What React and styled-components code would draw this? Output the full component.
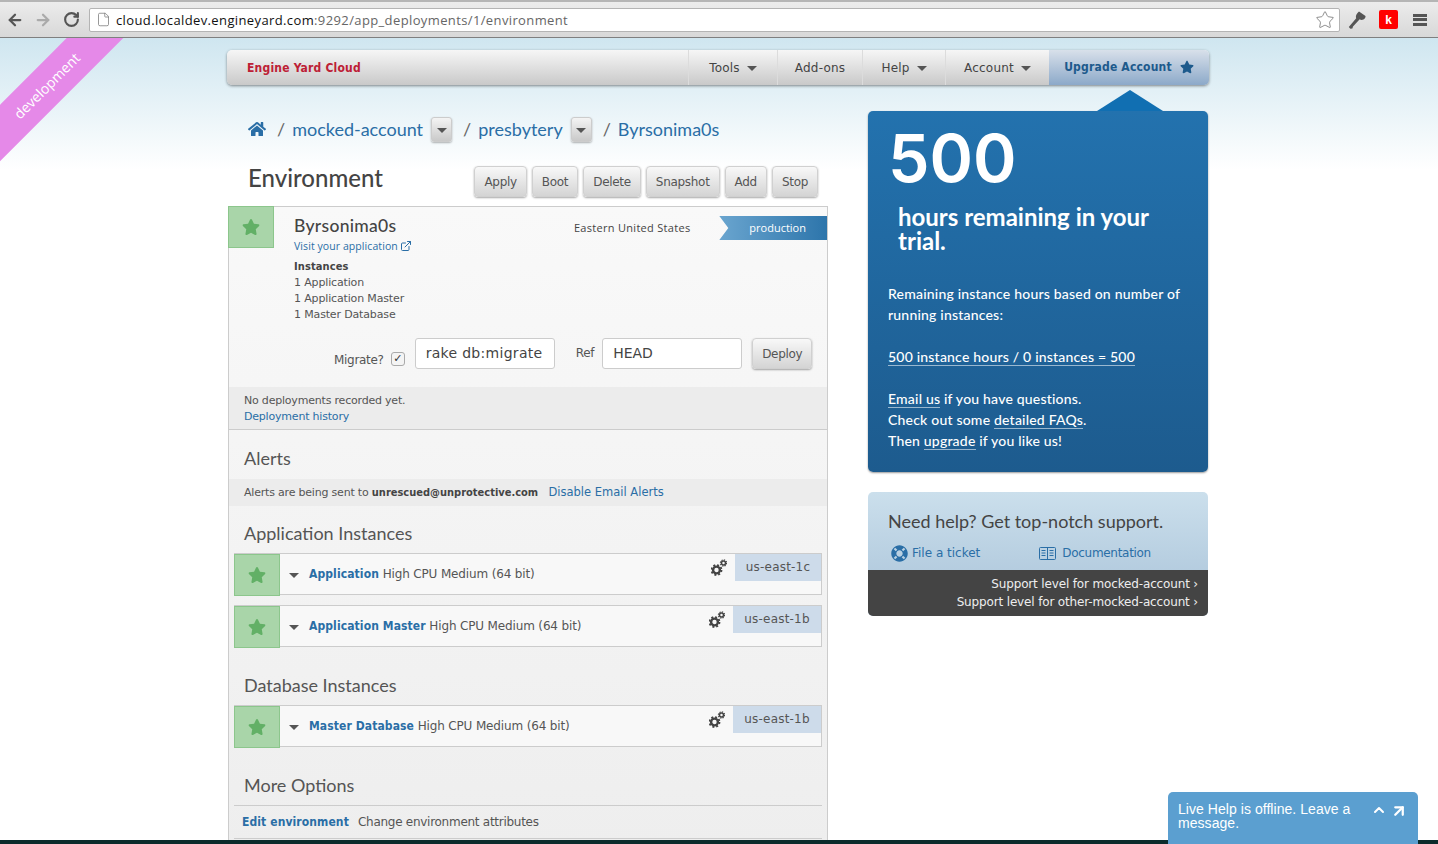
import React from 'react';
import styled, { createGlobalStyle } from 'styled-components';
import { ArrowLeft, ArrowRight, RotateCw, File, Star, ExternalLink, ChevronUp, ArrowUpRight } from 'lucide-react';
import { FaHome, FaStar, FaLifeRing } from 'react-icons/fa';

const GlobalStyle = createGlobalStyle`
  html, body {
    margin: 0;
    height: 844px;
    overflow: hidden;
    background: #fff;
    font-family: 'DejaVu Sans', sans-serif;
    color: #444;
  }
  * { box-sizing: border-box; }
  a { color: #2a6ea6; text-decoration: none; }
`;

const BLUE = '#2a6ea6';
const HEADING = "'Lato', 'Open Sans', sans-serif";
const CONDENSED = "'DejaVu Sans Condensed', 'DejaVu Sans', sans-serif";

const Browser = styled.div`
  height: 38px;
  background: linear-gradient(#ececec, #d8d8d8);
  border-bottom: 1px solid #7f7f7f;
  border-top: 2px solid #b5b5b5;
  display: flex;
  align-items: center;
  padding: 0 11px 0 1px;
  color: #555;
`;
const NavBtn = styled.span`
  width: 28px;
  display: flex;
  justify-content: center;
  color: ${(p) => (p.$off ? '#aaa' : '#555')};
`;
const Address = styled.div`
  width: 1251px;
  height: 24px;
  margin-left: 4px;
  background: #fff;
  border: 1px solid #b4b4b4;
  border-radius: 2px;
  display: flex;
  align-items: center;
  padding: 0 4px 0 6px;
  font-family: 'Open Sans', sans-serif;
  font-size: 13px;
  letter-spacing: 0.38px;
  color: #111;
  span { color: #666; }
  svg:first-child { margin-right: 5px; color: #777; }
  svg:last-child { margin-left: auto; color: #777; }
`;
const Tools = styled.div`
  margin-left: auto;
  display: flex;
  align-items: center;
  gap: 12px;
`;
const ExtK = styled.span`
  width: 19px;
  height: 19px;
  background: #f00;
  border-radius: 2px;
  color: #fff;
  font: bold 12px 'Liberation Sans', sans-serif;
  display: flex;
  align-items: center;
  justify-content: center;
`;
const Burger = styled.span`
  width: 14px;
  height: 12px;
  margin-left: 3px;
  border-top: 3px solid #555;
  border-bottom: 3px solid #555;
  position: relative;
  &::after {
    content: '';
    position: absolute;
    left: 0;
    right: 0;
    top: 1.5px;
    height: 3px;
    background: #555;
  }
`;

const Page = styled.div`
  position: relative;
  height: 806px;
  overflow: hidden;
  background: linear-gradient(#cfe6f0 0, #fff 132px);
`;
const DevRibbon = styled.div`
  position: absolute;
  left: -53px;
  top: 28px;
  width: 200px;
  height: 40px;
  transform: rotate(-45deg);
  background: #e589e8;
  color: #fff;
  font: 14px/40px 'Open Sans', sans-serif;
  text-align: center;
`;
const Container = styled.div`
  width: 982px;
  margin-left: 227px;
  padding-top: 12px;
`;

const TopNav = styled.nav`
  height: 35px;
  display: flex;
  border-radius: 5px;
  background: linear-gradient(#f6f6f6, #c9c9c9);
  box-shadow: 0 1px 3px rgba(0, 0, 0, 0.45);
  font-size: 12px;
  letter-spacing: 0.2px;
`;
const Brand = styled.div`
  flex: 1;
  padding-left: 20px;
  line-height: 37px;
  font-family: ${CONDENSED};
  font-weight: bold;
  color: #bd2035;
`;
const NavItem = styled.div`
  width: ${(p) => p.$w}px;
  border-left: 1px solid #dcdcdc;
  display: flex;
  align-items: center;
  justify-content: center;
  gap: 7px;
  color: #444;
`;
const Caret = styled.i`
  width: 0;
  height: 0;
  border-left: 5px solid transparent;
  border-right: 5px solid transparent;
  border-top: 5px solid ${(p) => p.$color || '#555'};
  margin-top: 2px;
`;
const Upgrade = styled.div`
  width: 160px;
  border-radius: 0 5px 5px 0;
  background: linear-gradient(#d8e0ea, #8ca9c9);
  display: flex;
  align-items: center;
  justify-content: center;
  gap: 8px;
  padding-bottom: 2px;
  font-family: ${CONDENSED};
  font-weight: bold;
  color: #1d5a8c;
`;

const Columns = styled.div`
  display: grid;
  grid-template-columns: 601px 341px;
  column-gap: 40px;
  margin-top: 26px;
`;
const Left = styled.div`
  padding-left: 1px;
`;
const Crumbs = styled.div`
  height: 38px;
  display: flex;
  align-items: center;
  padding: 0 0 2px 20px;
  font-family: ${HEADING};
  font-size: 18px;
  color: #666;
`;
const Slash = styled.span`
  margin: 0 7px 0 11px;
`;
const CrumbBtn = styled.span`
  width: 21px;
  height: 25px;
  margin-left: 8px;
  border: 1px solid #ccc;
  border-radius: 3px;
  background: linear-gradient(#f4f4f4, #c9c9c9);
  box-shadow: 0 1px 2px rgba(0, 0, 0, 0.3);
  display: flex;
  align-items: center;
  justify-content: center;
`;
const TitleRow = styled.div`
  height: 57px;
  display: flex;
  align-items: flex-start;
  padding: 17px 10px 0 20px;
`;
const Title = styled.h1`
  margin: -1px auto 0 0;
  font: 500 24px/26px ${HEADING};
  color: #444;
`;
const Btn = styled.button`
  height: 31px;
  margin-left: 5px;
  padding: 0 9px;
  border: 1px solid #d0d0d0;
  border-radius: 4px;
  background: linear-gradient(#f8f8f8, #d4d4d4);
  box-shadow: 0 1px 2px rgba(0, 0, 0, 0.35);
  font: 12px 'DejaVu Sans', sans-serif;
  letter-spacing: -0.3px;
  color: #555;
`;

const Panel = styled.section`
  height: 640px;
  border: 1px solid #ccc;
  border-bottom: 0;
  background: linear-gradient(#f9f9f9, #eee);
`;
const Head = styled.div`
  display: flex;
  align-items: flex-start;
  height: 115px;
  margin-left: -1px;
  margin-top: -1px;
`;
const StarBox = styled.div`
  width: 46px;
  height: ${(p) => p.$h || 42}px;
  flex: none;
  background: #a9d5a9;
  border: 1px solid #8cc68c;
  color: #62b066;
  display: flex;
  align-items: center;
  justify-content: center;
`;
const Info = styled.div`
  margin-left: 20px;
  padding-top: 10px;
  width: 281px;
  font-size: 11px;
  line-height: 16px;
  letter-spacing: -0.15px;
  color: #555;
  strong {
    display: block;
    margin-top: 5px;
    font-family: ${CONDENSED};
    letter-spacing: 0.1px;
    color: #444;
  }
`;
const EnvName = styled.div`
  font: 500 17.5px/20px ${HEADING};
  letter-spacing: 0.3px;
  color: #444;
  margin-bottom: 2px;
`;
const Visit = styled.a`
  display: flex;
  align-items: center;
  gap: 2px;
  font: 10.5px/16px 'Open Sans', sans-serif;
  letter-spacing: 0.08px;
`;
const Region = styled.div`
  margin-top: 14px;
  width: 146px;
  font: 11px/16px 'Open Sans', sans-serif;
  letter-spacing: 0.3px;
  color: #444;
`;
const Ribbon = styled.div`
  width: 108px;
  height: 24px;
  margin-top: 10px;
  padding-left: 30px;
  background: linear-gradient(90deg, #6aa5cf, #2d75ab);
  clip-path: polygon(0 0, 100% 0, 100% 100%, 0 100%, 9px 50%);
  color: #fff;
  font: 11px/24px 'Open Sans', sans-serif;
`;
const DeployRow = styled.div`
  height: 49px;
  margin-top: 17px;
  display: flex;
  align-items: flex-start;
  padding-left: 105px;
  font-size: 12px;
  letter-spacing: -0.3px;
  color: #555;
`;
const Label = styled.span`
  line-height: 31px;
  margin-top: ${(p) => p.$top || 0}px;
`;
const Check = styled.span`
  width: 14px;
  height: 14px;
  margin: 14px 10px 0 7px;
  border: 1px solid #aaa;
  border-radius: 3px;
  background: #f4f4f4;
  font-size: 11px;
  line-height: 12px;
  text-align: center;
  color: #333;
`;
const Field = styled.div`
  width: ${(p) => p.$w}px;
  height: 31px;
  margin: 0 ${(p) => p.$after}px 0 8px;
  padding-left: 10px;
  background: #fff;
  border: 1px solid #ccc;
  border-radius: 3px;
  font-size: 14px;
  line-height: 29px;
  letter-spacing: ${(p) => p.$spacing || 0}px;
  color: #444;
  &:first-of-type { margin-left: 0; }
`;
const Band = styled.div`
  padding: ${(p) => p.$pad};
  background: #ececec;
  font-size: 11px;
  line-height: 16px;
  letter-spacing: -0.2px;
  color: #555;
  border-bottom: ${(p) => (p.$line ? '1px solid #ccc' : '0')};
  b {
    font-family: ${CONDENSED};
    letter-spacing: 0;
    color: #444;
  }
`;
const AlertLink = styled.a`
  margin-left: 7px;
  font-size: 11.5px;
  letter-spacing: 0;
`;
const SectionTitle = styled.h2`
  margin: 0;
  padding: ${(p) => p.$before || 18}px 0 ${(p) => p.$after || 10}px 15px;
  font: 400 18px/20px ${HEADING};
  color: #555;
`;
const Row = styled.div`
  height: 42px;
  margin: 0 5px 10px;
  display: flex;
  background: #f8f8f8;
  border: 1px solid #ccc;
  border-left: 0;
  font-size: 12px;
  color: #555;
  &:last-of-type { margin-bottom: 0; }
`;
const RowCaret = styled(Caret)`
  align-self: center;
  margin: 2px 10px 0 9px;
`;
const RowText = styled.div`
  flex: 1;
  line-height: 40px;
  letter-spacing: -0.15px;
  a {
    font-family: ${CONDENSED};
    font-weight: bold;
    letter-spacing: 0.1px;
  }
`;
const Gears = styled.svg`
  margin: 5px 8px 0 0;
  color: #444;
`;
const Zone = styled.div`
  width: ${(p) => p.$w}px;
  height: 27px;
  background: #cddbea;
  text-align: center;
  line-height: 26px;
  letter-spacing: 0.2px;
`;
const Option = styled.div`
  height: 34px;
  margin: 0 5px;
  padding-left: 8px;
  border-top: 1px solid #ccc;
  border-bottom: 1px solid #ccc;
  font-size: 12px;
  line-height: 32px;
  letter-spacing: -0.27px;
  color: #555;
  a {
    font-family: ${CONDENSED};
    font-weight: bold;
    letter-spacing: 0.1px;
    margin-right: 9px;
  }
`;

const Right = styled.aside`
  padding-right: 1px;
`;
const Trial = styled.div`
  position: relative;
  height: 361px;
  padding: 17px 20px 0;
  border-radius: 5px;
  background: linear-gradient(#2372ae, #1d5b8e);
  box-shadow: 0 1px 2px rgba(0, 0, 0, 0.4);
  color: #fff;
  font-family: ${HEADING};
  &::before {
    content: '';
    position: absolute;
    left: 229px;
    top: -21px;
    width: 66px;
    height: 21px;
    background: #116fb2;
    clip-path: polygon(50% 0, 100% 100%, 0 100%);
  }
`;
const Big = styled.div`
  font-family: 'Inter', sans-serif;
  font-size: 66px;
  font-weight: 600;
  line-height: 60px;
`;
const Hours = styled.div`
  margin: 17px 30px 30px 10px;
  font-size: 24px;
  font-weight: 700;
  line-height: 24px;
`;
const TrialText = styled.p`
  margin: 0 0 ${(p) => p.$after || 0}px;
  font-size: 14px;
  font-weight: 500;
  line-height: 21px;
  letter-spacing: 0.2px;
  u { text-decoration: none; border-bottom: 1px solid rgba(255, 255, 255, 0.55); }
`;
const Help = styled.div`
  height: 124px;
  margin-top: 20px;
  border-radius: 5px;
  overflow: hidden;
  background: linear-gradient(#cbdfec, #a8c2d8);
`;
const HelpTitle = styled.div`
  padding: 19px 20px 0;
  font: 400 18px/20px ${HEADING};
  color: #444;
`;
const HelpLinks = styled.div`
  height: 39px;
  display: flex;
  align-items: center;
  padding: 5px 0 0 23px;
  font-size: 12px;
  letter-spacing: -0.15px;
`;
const HelpLink = styled.a`
  display: flex;
  align-items: center;
  gap: ${(p) => p.$gap}px;
  margin-left: ${(p) => p.$left || 0}px;
  letter-spacing: ${(p) => p.$spacing || 0}px;
`;
const Support = styled.div`
  height: 46px;
  padding: 5px 10px 0;
  background: #444;
  color: #eee;
  font-size: 12px;
  line-height: 18px;
  letter-spacing: -0.15px;
  text-align: right;
`;

const Chat = styled.div`
  position: fixed;
  right: 20px;
  bottom: 0;
  width: 250px;
  height: 52px;
  padding: 10px 10px 0;
  border-radius: 5px 5px 0 0;
  background: #5b9fd0;
  color: #fff;
  font: 14px/14px 'Liberation Sans', sans-serif;
  letter-spacing: 0.05px;
  display: flex;
`;
const ChatText = styled.div`
  width: 186px;
`;
const ChatIcons = styled.div`
  display: flex;
  gap: 3px;
  margin-left: 9px;
  height: 16px;
`;
const BottomStrip = styled.div`
  position: fixed;
  left: 0;
  right: 0;
  bottom: 0;
  height: 4px;
  background: #0b2c2c;
`;

function GearIcon() {
  return (
    <Gears width="16" height="17" viewBox="0 0 16 17">
      <circle cx="5.5" cy="11" r="3.4" fill="none" stroke="currentColor" strokeWidth="2.4" />
      <circle cx="5.5" cy="11" r="5" fill="none" stroke="currentColor" strokeWidth="1.8" strokeDasharray="2 1.93" />
      <circle cx="12.5" cy="4" r="2" fill="none" stroke="currentColor" strokeWidth="1.5" />
      <circle cx="12.5" cy="4" r="3.1" fill="none" stroke="currentColor" strokeWidth="1.2" strokeDasharray="1.3 1.13" />
    </Gears>
  );
}

function KeyIcon() {
  return (
    <svg width="20" height="20" viewBox="0 0 20 20" fill="#555">
      <path d="M12 1.5 18.5 6c.3.8-.4 2.6-2 3.4-1.4.7-2.8.6-3.8-.1L6 16.5l-.6 2-2 .2L1.8 17l7.4-8.8c-.6-1.3-.3-2.8.6-4.2.5-.9 1.3-1.9 2.2-2.5Z" />
    </svg>
  );
}

function BookIcon() {
  return (
    <svg width="17" height="13" viewBox="0 0 17 13" fill="none" stroke="currentColor" strokeWidth="1">
      <rect x="0.5" y="0.5" width="16" height="12" rx="1" />
      <path d="M8.5 1v11M2.5 3.5h4M2.5 6h4M2.5 8.5h4M10.5 3.5h4M10.5 6h4M10.5 8.5h4" />
    </svg>
  );
}

function InstanceRow({ name, zone, zoneWidth }) {
  return (
    <Row>
      <StarBox><FaStar size={18} /></StarBox>
      <RowCaret />
      <RowText><a href="#">{name}</a> High CPU Medium (64 bit)</RowText>
      <GearIcon />
      <Zone $w={zoneWidth}>{zone}</Zone>
    </Row>
  );
}

export default function App() {
  return (
    <>
      <GlobalStyle />
      <Browser>
        <NavBtn><ArrowLeft size={18} strokeWidth={3} /></NavBtn>
        <NavBtn $off><ArrowRight size={18} strokeWidth={3} /></NavBtn>
        <NavBtn><RotateCw size={17} strokeWidth={3} /></NavBtn>
        <Address>
          <File size={15} strokeWidth={1.2} />
          cloud.localdev.engineyard.com<span>:9292/app_deployments/1/environment</span>
          <Star size={20} strokeWidth={1} />
        </Address>
        <Tools>
          <KeyIcon />
          <ExtK>k</ExtK>
          <Burger />
        </Tools>
      </Browser>
      <Page>
        <DevRibbon>development</DevRibbon>
        <Container>
          <TopNav>
            <Brand>Engine Yard Cloud</Brand>
            <NavItem $w={89}>Tools <Caret /></NavItem>
            <NavItem $w={85}>Add-ons</NavItem>
            <NavItem $w={83}>Help <Caret /></NavItem>
            <NavItem $w={104}>Account <Caret /></NavItem>
            <Upgrade>Upgrade Account <FaStar size={14} /></Upgrade>
          </TopNav>
          <Columns>
            <Left>
              <Crumbs>
                <FaHome size={18} color={BLUE} />
                <Slash>/</Slash>
                <a href="#">mocked-account</a>
                <CrumbBtn><Caret /></CrumbBtn>
                <Slash>/</Slash>
                <a href="#">presbytery</a>
                <CrumbBtn><Caret /></CrumbBtn>
                <Slash>/</Slash>
                <a href="#">Byrsonima0s</a>
              </Crumbs>
              <TitleRow>
                <Title>Environment</Title>
                <Btn>Apply</Btn>
                <Btn>Boot</Btn>
                <Btn>Delete</Btn>
                <Btn>Snapshot</Btn>
                <Btn>Add</Btn>
                <Btn>Stop</Btn>
              </TitleRow>
              <Panel>
                <Head>
                  <StarBox><FaStar size={18} /></StarBox>
                  <Info>
                    <EnvName>Byrsonima0s</EnvName>
                    <Visit href="#">Visit your application<ExternalLink size={12} /></Visit>
                    <strong>Instances</strong>
                    1 Application<br />
                    1 Application Master<br />
                    1 Master Database
                  </Info>
                  <Region>Eastern United States</Region>
                  <Ribbon>production</Ribbon>
                </Head>
                <DeployRow>
                  <Label $top={7}>Migrate?</Label>
                  <Check>✓</Check>
                  <Field $w={140} $after={21} $spacing={0.3}>rake db:migrate</Field>
                  <Label>Ref</Label>
                  <Field $w={140} $after={5}>HEAD</Field>
                  <Btn>Deploy</Btn>
                </DeployRow>
                <Band $pad="6px 15px 4px" $line>
                  No deployments recorded yet.<br />
                  <a href="#">Deployment history</a>
                </Band>
                <SectionTitle $after={11}>Alerts</SectionTitle>
                <Band $pad="5px 15px">
                  Alerts are being sent to <b>unrescued@unprotective.com</b> <AlertLink href="#">Disable Email Alerts</AlertLink>
                </Band>
                <SectionTitle $before={17}>Application Instances</SectionTitle>
                <InstanceRow name="Application" zone="us-east-1c" zoneWidth={86} />
                <InstanceRow name="Application Master" zone="us-east-1b" zoneWidth={88} />
                <SectionTitle>Database Instances</SectionTitle>
                <InstanceRow name="Master Database" zone="us-east-1b" zoneWidth={88} />
                <SectionTitle>More Options</SectionTitle>
                <Option><a href="#">Edit environment</a>Change environment attributes</Option>
              </Panel>
            </Left>
            <Right>
              <Trial>
                <Big>500</Big>
                <Hours>hours remaining in your trial.</Hours>
                <TrialText $after={21}>Remaining instance hours based on number of running instances:</TrialText>
                <TrialText $after={21}><u>500 instance hours / 0 instances = 500</u></TrialText>
                <TrialText><u>Email us</u> if you have questions.</TrialText>
                <TrialText>Check out some <u>detailed FAQs</u>.</TrialText>
                <TrialText>Then <u>upgrade</u> if you like us!</TrialText>
              </Trial>
              <Help>
                <HelpTitle>Need help? Get top-notch support.</HelpTitle>
                <HelpLinks>
                  <HelpLink href="#" $gap={4}><FaLifeRing size={17} />File a ticket</HelpLink>
                  <HelpLink href="#" $gap={6} $left={59} $spacing={-0.3}><BookIcon />Documentation</HelpLink>
                </HelpLinks>
                <Support>
                  Support level for mocked-account ›<br />
                  Support level for other-mocked-account ›
                </Support>
              </Help>
            </Right>
          </Columns>
        </Container>
      </Page>
      <BottomStrip />
      <Chat>
        <ChatText>Live Help is offline. Leave a message.</ChatText>
        <ChatIcons>
          <ChevronUp size={16} strokeWidth={3} />
          <ArrowUpRight size={18} strokeWidth={3} />
        </ChatIcons>
      </Chat>
    </>
  );
}
